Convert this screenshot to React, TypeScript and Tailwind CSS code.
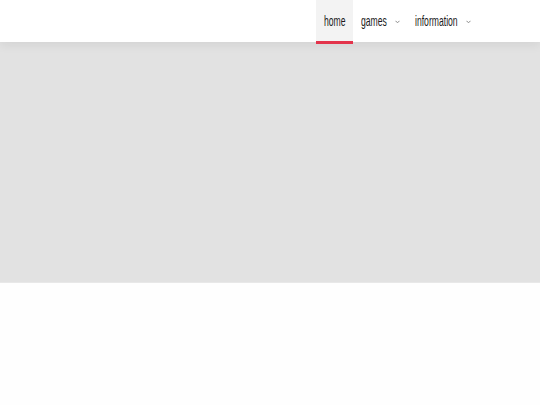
const items = [
  { label: "home", w: "w-[22px]", active: true, sub: false },
  { label: "games", w: "w-[24px]", active: false, sub: true },
  { label: "information", w: "w-[41px]", active: false, sub: true },
];

function Caret() {
  return (
    <svg width="5" height="4" viewBox="0 0 5 4" className="ml-[10px] mt-[3px]">
      <polyline points="0.5,0.8 2.5,2.8 4.5,0.8" fill="none" stroke="#8a8a8a" strokeWidth="1" />
    </svg>
  );
}

export default function App() {
  return (
    <div className="min-h-[405px] bg-[#fefefe] font-['Liberation_Sans',Arial,sans-serif]">
      <header className="relative z-10 flex h-[42px] justify-end bg-white pr-[62px] shadow-[0_3px_10px_rgba(0,0,0,0.07)]">
        <nav className="flex h-full">
          {items.map((it) => (
            <div
              key={it.label}
              className={`relative flex h-full items-center pb-[2px] pl-[8px] pr-[7px] text-[15px] text-[#1a1a1a] ${
                it.active ? "bg-[#f3f3f3]" : ""
              }`}
            >
              <span className={`${it.w} overflow-visible whitespace-nowrap leading-none`}>
                <span className="inline-block origin-left scale-x-[0.575]">{it.label}</span>
              </span>
              {it.sub && <Caret />}
              {it.active && (
                <span className="absolute bottom-[-2px] left-0 right-0 h-[3px] bg-[#e3344b]" />
              )}
            </div>
          ))}
        </nav>
      </header>
      <section className="h-[241px] border-b border-[#e8e8e8] bg-[#e2e2e2]" />
    </div>
  );
}
